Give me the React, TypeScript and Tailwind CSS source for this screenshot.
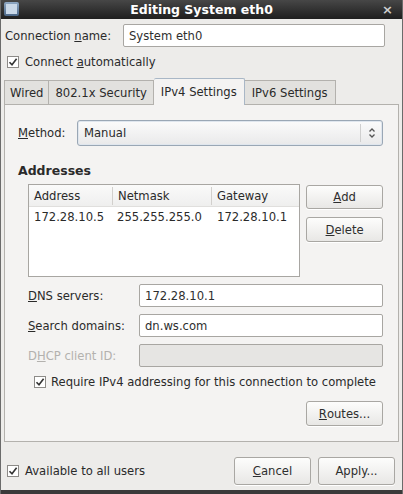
import React from "react";

const font = { fontFamily: '"DejaVu Sans", "Liberation Sans", sans-serif' };

const Check = () => (
  <span className="inline-flex h-[12px] w-[12px] shrink-0 items-center justify-center border border-[#8d8b88] bg-white">
    <svg width="10" height="10" viewBox="0 0 10 10">
      <path d="M1.5 5.2 L4 7.8 L8.6 1.8" fill="none" stroke="#333" strokeWidth="1.6" />
    </svg>
  </span>
);

const Btn = ({ children, className = "" }: { children: React.ReactNode; className?: string }) => (
  <div
    className={`flex items-center justify-center rounded-[3px] border border-[#a9a7a3] bg-gradient-to-b from-[#fdfdfc] to-[#e8e7e5] text-[#2e2e2e] shadow-[0_1px_0_#fff] ${className}`}
  >
    {children}
  </div>
);

const Field = ({ value, disabled }: { value?: string; disabled?: boolean }) => (
  <div
    className={`flex h-[23px] flex-1 items-center rounded-[2px] border border-[#a8a6a2] px-[5px] text-[#2e2e2e] ${
      disabled ? "bg-[#e6e5e3]" : "bg-white"
    }`}
  >
    {value}
  </div>
);

export default function App() {
  return (
    <div
      style={font}
      className="flex h-[494px] w-[403px] flex-col overflow-hidden border-x border-[#6b6b6b] bg-[#edecea] text-[11.6px] leading-[18px] text-[#2a2a2a]"
    >
      {/* title bar */}
      <div className="relative flex h-[19px] shrink-0 items-center justify-center bg-gradient-to-b from-[#474747] to-[#1f1f1f]">
        <div className="absolute left-[3px] top-[2px] h-[14px] w-[15px] rounded-[2px] bg-gradient-to-b from-[#8fa8c4] to-[#4b6787] p-[2px]">
          <div className="h-full w-full bg-[#c9d8e8]" />
        </div>
        <span className="text-[12.5px] font-bold text-white">Editing System eth0</span>
        <span className="absolute right-[9px] top-[1px] text-[13px] font-bold text-[#cfcfcf]">×</span>
      </div>

      {/* connection name */}
      <div className="mt-[5px] flex items-center pl-[4px] pr-[17px]">
        <span className="w-[118px]">
          Connection <span className="underline">n</span>ame:
        </span>
        <Field value="System eth0" />
      </div>

      <div className="mt-[6px] flex items-center gap-[6px] pl-[6px]">
        <Check />
        <span>
          Connect <span className="underline">a</span>utomatically
        </span>
      </div>

      {/* tabs */}
      <div className="mt-[7px] flex h-[26px] items-end pl-[3px]">
        <div className="flex h-[24px] items-center border border-b-0 border-[#b3b1ad] bg-[#e2e1de] px-[5px]">Wired</div>
        <div className="flex h-[24px] items-center border border-b-0 border-l-0 border-[#b3b1ad] bg-[#e2e1de] px-[6px]">
          802.1x Security
        </div>
        <div className="relative z-10 -mb-px flex h-[27px] items-center rounded-t-[2px] border border-b-0 border-l-0 border-[#a9b7c6] bg-[#f4f3f2] px-[7px]">
          IPv4 Settings
        </div>
        <div className="flex h-[24px] items-center border border-b-0 border-l-0 border-[#b3b1ad] bg-[#e2e1de] px-[7px]">
          IPv6 Settings
        </div>
      </div>

      {/* panel */}
      <div className="mx-[3px] flex h-[338px] flex-col border border-[#b3b1ad] bg-[#f4f3f2] pl-[13px] pr-[15px]">
        <div className="mt-[15px] flex items-center">
          <span className="w-[59px]">
            <span className="underline">M</span>ethod:
          </span>
          <div className="flex h-[26px] flex-1 items-center rounded-[3px] border border-[#9aa7b5] bg-gradient-to-b from-[#fbfbfb] to-[#e9e9ea] pl-[6px] shadow-[inset_0_0_0_1px_#dfe6ee]">
            <span className="flex-1">Manual</span>
            <div className="flex h-[18px] w-[22px] items-center justify-center border-l border-[#cfcfcf]">
              <svg width="8" height="12" viewBox="0 0 8 12">
                <path d="M1.5 4.5 L4 2 L6.5 4.5 M1.5 7.5 L4 10 L6.5 7.5" fill="none" stroke="#555" strokeWidth="1.3" />
              </svg>
            </div>
          </div>
        </div>

        <div className="mt-[16px] text-[12.5px] font-bold">Addresses</div>

        <div className="mt-[4px] flex gap-[6px] pl-[10px]">
          <div className="h-[93px] w-[273px] border border-[#a8a6a2] bg-white">
            <div className="flex h-[22px] items-center border-b border-[#e0dfdd] bg-gradient-to-b from-[#fafafa] to-[#efefee]">
              <span className="w-[84px] border-r border-[#d2d0cd] pl-[5px]">Address</span>
              <span className="w-[99px] border-r border-[#d2d0cd] pl-[5px]">Netmask</span>
              <span className="pl-[5px]">Gateway</span>
            </div>
            <div className="flex h-[19px] items-center">
              <span className="w-[84px] pl-[5px]">172.28.10.5</span>
              <span className="w-[99px] pl-[4px]">255.255.255.0</span>
              <span className="pl-[5px]">172.28.10.1</span>
            </div>
          </div>
          <div className="flex w-[77px] flex-col gap-[8px] pt-[1px]">
            <Btn className="h-[24px]">
              <span className="underline">A</span>dd
            </Btn>
            <Btn className="h-[25px]">
              <span className="underline">D</span>elete
            </Btn>
          </div>
        </div>

        <div className="mt-[7px] flex flex-col gap-[7px] pl-[10px]">
          <div className="flex items-center">
            <span className="w-[111px]">
              <span className="underline">D</span>NS servers:
            </span>
            <Field value="172.28.10.1" />
          </div>
          <div className="flex items-center">
            <span className="w-[111px]">
              <span className="underline">S</span>earch domains:
            </span>
            <Field value="dn.ws.com" />
          </div>
          <div className="flex items-center">
            <span className="w-[111px] text-[#b3b1ae]">
              D<span className="underline">H</span>CP client ID:
            </span>
            <Field disabled />
          </div>
        </div>

        <div className="mt-[6px] flex items-center gap-[5px] whitespace-nowrap pl-[16px]">
          <Check />
          <span>Require IPv4 addressing for this connection to complete</span>
        </div>

        <div className="mt-[10px] flex justify-end">
          <Btn className="h-[25px] w-[77px]">
            <span className="underline">R</span>outes...
          </Btn>
        </div>
      </div>

      {/* footer */}
      <div className="mt-[15px] flex items-center pl-[6px] pr-[7px]">
        <div className="flex flex-1 items-center gap-[6px]">
          <Check />
          <span>Available to all users</span>
        </div>
        <Btn className="h-[28px] w-[77px]">
          <span className="underline">C</span>ancel
        </Btn>
        <Btn className="ml-[7px] h-[28px] w-[77px]">Apply...</Btn>
      </div>
      <div className="mt-auto h-[4px] bg-[#3a3a3a]" />
    </div>
  );
}
